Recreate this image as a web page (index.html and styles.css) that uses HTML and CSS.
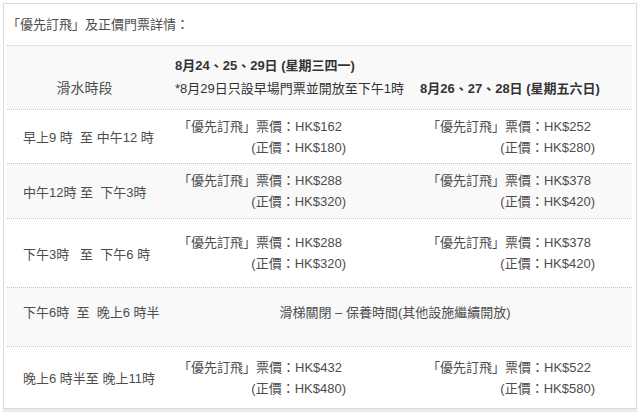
FILE: index.html
```html
<!DOCTYPE html>
<html lang="zh-Hant">
<head>
<meta charset="utf-8">
<title>優先訂飛</title>
<link rel="stylesheet" href="styles.css">
</head>
<body>
<div class="box">
  <div class="title">「優先訂飛」及正價門票詳情：</div>
  <div class="table">
    <div class="row head shade">
      <div class="cell c1"><span class="slot">滑水時段</span></div>
      <div class="cell c2 hd">
        <div class="b">8月24、25、29日 (星期三四一)</div>
        <div>*8月29日只設早場門票並開放至下午1時</div>
      </div>
      <div class="cell c3 hd"><div class="b">8月26、27、28日 (星期五六日)</div></div>
    </div>
    <div class="row r1">
      <div class="cell c1">早上9 時&nbsp; 至 中午12 時</div>
      <div class="cell c2"><div class="price"><span class="l1">「優先訂飛」票價：HK$162</span><span>(正價：HK$180)</span></div></div>
      <div class="cell c3"><div class="price"><span class="l1">「優先訂飛」票價：HK$252</span><span>(正價：HK$280)</span></div></div>
    </div>
    <div class="row r2 shade">
      <div class="cell c1">中午12時 至&nbsp; 下午3時</div>
      <div class="cell c2"><div class="price"><span class="l1">「優先訂飛」票價：HK$288</span><span>(正價：HK$320)</span></div></div>
      <div class="cell c3"><div class="price"><span class="l1">「優先訂飛」票價：HK$378</span><span>(正價：HK$420)</span></div></div>
    </div>
    <div class="row r3">
      <div class="cell c1">下午3時&nbsp;&nbsp; 至&nbsp; 下午6 時</div>
      <div class="cell c2"><div class="price"><span class="l1">「優先訂飛」票價：HK$288</span><span>(正價：HK$320)</span></div></div>
      <div class="cell c3"><div class="price"><span class="l1">「優先訂飛」票價：HK$378</span><span>(正價：HK$420)</span></div></div>
    </div>
    <div class="row r4 shade">
      <div class="cell c1">下午6時&nbsp; 至&nbsp; 晚上6 時半</div>
      <div class="cell span">滑梯關閉 – 保養時間(其他設施繼續開放)</div>
    </div>
    <div class="row r5">
      <div class="cell c1">晚上6 時半至 晚上11時</div>
      <div class="cell c2"><div class="price"><span class="l1">「優先訂飛」票價：HK$432</span><span>(正價：HK$480)</span></div></div>
      <div class="cell c3"><div class="price"><span class="l1">「優先訂飛」票價：HK$522</span><span>(正價：HK$580)</span></div></div>
    </div>
  </div>
</div>
</body>
</html>
```
FILE: styles.css
```css
html, body {
  margin: 0;
  padding: 0;
  background: #ffffff;
}
body {
  width: 640px;
  height: 412px;
  overflow: hidden;
  font-family: "Liberation Sans", "Noto Sans CJK TC", sans-serif;
  font-size: 13px;
  color: #4d4d4d;
}
.box {
  margin: 3px 0 0 3px;
  width: 632px;
  height: 404px;
  border: 1px solid #dcdcdc;
  background: #fff;
  box-shadow: 0 3px 0 #ececec;
  padding: 0 3px 0 3px;
  box-sizing: content-box;
}
.box {
  width: 626px;
}
.title {
  height: 41px;
  display: flex;
  align-items: center;
  padding-left: 0;
  line-height: 1;
}
.table {
  display: flex;
  flex-direction: column;
}
.row {
  display: grid;
  grid-template-columns: 163px 245px 217px;
  border-top: 1px dotted #c8c8c8;
  margin-right: 1px;
}
.shade {
  background: #f9f9f9;
}
.cell {
  display: flex;
  align-items: center;
}
.c1 {
  padding-left: 16px;
}
.c2 {
  padding-left: 8px;
}
.c3 {
  padding-left: 12px;
}
.head {
  height: 63px;
}
.head .c1 {
  padding-left: 0;
  justify-content: center;
  align-items: flex-end;
  padding-bottom: 14px;
}
.slot {
  font-size: 14px;
  line-height: 1;
  position: relative;
  left: -4px;
}
.hd {
  flex-direction: column;
  align-items: flex-start;
  justify-content: flex-end;
  padding-bottom: 14px;
  line-height: 23px;
  color: #333;
}
.c2.hd {
  padding-left: 5px;
}
.c3.hd {
  padding-left: 5px;
}
.hd div {
  line-height: 1;
  margin-top: 10px;
}
.b {
  font-weight: bold;
  color: #333;
}
.price {
  display: flex;
  flex-direction: column;
  align-items: flex-end;
  line-height: 21px;
}
.l1 {
  margin-right: 4px;
}
.r1 { height: 53px; }
.r2 { height: 54px; }
.r3 { height: 68px; }
.r4 { height: 58px; }
.r4 .cell { padding-bottom: 12px; }
.r5 { height: 61px; }
.span {
  grid-column: 2 / 4;
  justify-content: center;
  padding-left: 0;
  padding-right: 12px;
}
```
